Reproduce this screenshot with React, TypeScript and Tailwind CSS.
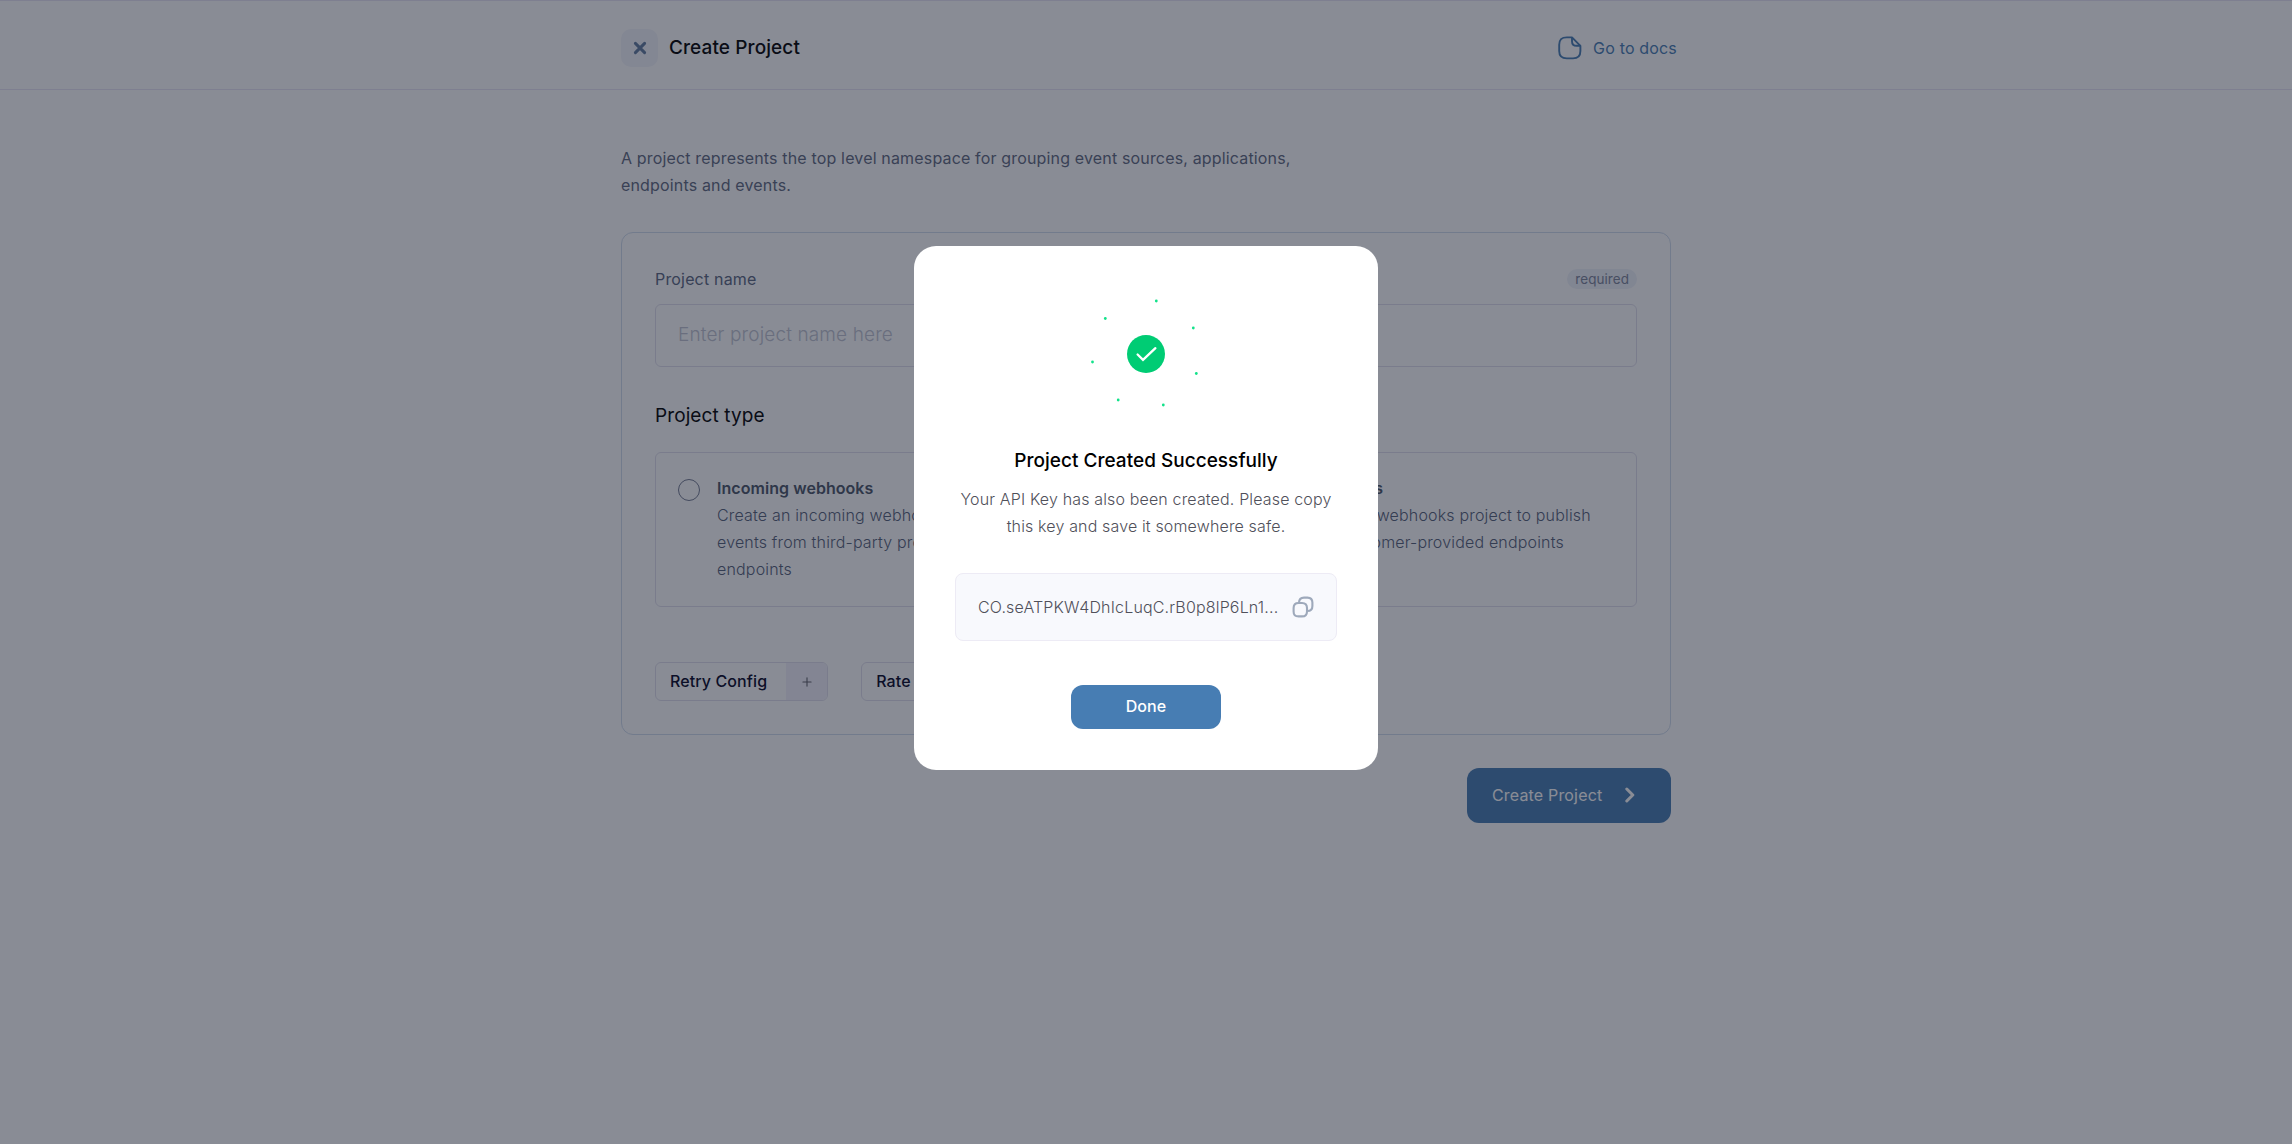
import { Plus } from "lucide-react";

const sparks = [
  [70.3, 7],
  [19.3, 24.5],
  [107.3, 34],
  [110.3, 79.5],
  [32.2, 106],
  [77.3, 111],
  [6.5, 68],
];

function CloseIcon() {
  return (
    <svg width="14" height="14" viewBox="0 0 14 14" fill="none" stroke="#607b9e" strokeWidth="3" strokeLinecap="round">
      <path d="M2.4 2.4l9.2 9.2M11.6 2.4l-9.2 9.2" />
    </svg>
  );
}

function DocIcon() {
  return (
    <svg width="24" height="24" viewBox="0 0 24 24" fill="none" stroke="#477db3" strokeWidth="1.9" strokeLinejoin="round">
      <path d="M14 1.4H8.8C3.6 1.4 1.2 3.6 1.2 8.8v6.2c0 5.2 2.4 7.4 7.6 7.4h6.2c5.2 0 7.4-2.2 7.4-7.4V9.8z" />
      <path d="M14 1.4v3.8c0 3.2 1.2 4.6 4.6 4.6h3.8" />
    </svg>
  );
}

function CopyIcon() {
  return (
    <svg width="22" height="22" viewBox="0 0 22 22" fill="none" stroke="#9ea9bb" strokeWidth="2.1" strokeLinejoin="round">
      <path d="M15 12.4v3c0 3.6-1.4 5-5 5H6.6c-3.6 0-5-1.4-5-5V12c0-3.6 1.4-5 5-5H10c3.6 0 5 1.4 5 5z" />
      <path d="M7 6.6c.1-3.500 1.500-5 5-5h3.400c3.600 0 5 1.400 5 5V10c0 3.600-1.400 5-5 5h-.4" />
    </svg>
  );
}

function SuccessMark() {
  return (
    <svg width="120" height="120" viewBox="0 0 120 120" fill="none">
      <circle cx="60" cy="60" r="19" fill="#00cc74" />
      <path d="M51.6 60.5L57 65.8 69.4 54.2" stroke="#fff" strokeWidth="2.3" strokeLinecap="round" />
      {sparks.map(([cx, cy]) => (
        <circle key={cx} cx={cx} cy={cy} r="1.4" fill="#12e28a" />
      ))}
    </svg>
  );
}

function TypeCard({ title, text }: { title: string; text: string[] }) {
  return (
    <div className="flex h-[155px] flex-1 gap-[17px] rounded-md border border-[#e1dfec] pt-[22px] pl-[22px]">
      <div className="mt-[4px] h-[22px] w-[22px] shrink-0 rounded-full border border-[#737a91]" />
      <div className="leading-[27px]">
        <h4 className="font-semibold tracking-[0.05px] text-[#4b5567]">{title}</h4>
        <p className="font-light text-[#556078]">
          {text.map((line) => (
            <span key={line} className="block whitespace-nowrap">{line}</span>
          ))}
        </p>
      </div>
    </div>
  );
}

function ConfigButton({ label }: { label: string }) {
  return (
    <button className="flex h-[39px] overflow-hidden rounded-md border border-[#e1dfec] font-medium tracking-[0.1px] text-[#050524]">
      <span className="flex h-full items-center pr-[19px] pb-px pl-[14px]">{label}</span>
      <span className="flex h-full w-[41px] items-center justify-center bg-[#f2f1fa]">
        <Plus size={14} strokeWidth={1.9} color="#5f5f68" />
      </span>
    </button>
  );
}

export default function App() {
  return (
    <div className="h-[1144px] overflow-hidden bg-white font-['Inter',sans-serif] text-[16px] tracking-[0.17px]">
      <header className="h-[90px] border-t border-b border-[#e9e5f4]">
        <div className="mx-auto flex h-[93px] w-[1056px] items-center justify-between pl-[3px]">
          <div className="flex items-center gap-[11px]">
            <button className="flex h-[38px] w-[37px] items-center justify-center rounded-[10px] bg-[#f3f4fa]">
              <CloseIcon />
            </button>
            <h1 className="pt-px text-[19px] leading-7 font-medium tracking-[0.1px] text-black">Create Project</h1>
          </div>
          <a className="mr-[-3px] flex items-center gap-[11px] text-[#477db3]">
            <DocIcon />
            Go to docs
          </a>
        </div>
      </header>

      <main className="mx-auto w-[1050px] pt-[55px]">
        <p className="w-[700px] leading-[27px] tracking-[0.16px] text-[#5f6980]">
          A project represents the top level namespace for grouping event sources, applications, endpoints and events.
        </p>

        <section className="mt-[33px] h-[503px] rounded-xl border border-[#d0dcec] px-[33px] pt-[32px]">
          <div className="flex h-7 items-center justify-between text-[#5a6680]">
            <label>Project name</label>
            <span className="flex h-5 items-center rounded-full bg-[#eff2f9] px-2 text-[13.5px] tracking-[0.05px] text-[#7c8499]">
              required
            </span>
          </div>
          <div className="mt-[11px] flex h-[63px] items-center rounded-md border border-[#e1dfec] px-[22px] text-[19px] font-light tracking-[0.14px] text-[#c0c3d0]">
            Enter project name here
          </div>
          <h2 className="mt-[35px] text-[19px] leading-7 font-normal tracking-[0.1px] text-black">Project type</h2>
          <div className="mt-[22px] flex gap-[38px]">
            <TypeCard
              title="Incoming webhooks"
              text={["Create an incoming webhooks project to proxy", "events from third-party providers to your", "endpoints"]}
            />
            <TypeCard
              title="Outgoing webhooks"
              text={["Create an outgoing webhooks project to publish", "events to your customer-provided endpoints"]}
            />
          </div>
          <div className="mt-[55px] flex gap-[33px]">
            <ConfigButton label="Retry Config" />
            <ConfigButton label="Rate Limit" />
          </div>
        </section>

        <div className="mt-[33px] flex justify-end">
          <button className="flex h-[55px] w-[204px] items-center gap-[23px] rounded-xl bg-[#477db3] pb-px pl-[25px] text-white">
            Create Project
            <svg width="10" height="16" viewBox="0 0 10 16" fill="none" stroke="#fff" strokeWidth="3" strokeLinecap="round" strokeLinejoin="round">
              <path d="M1.8 2l6 6-6 6" />
            </svg>
          </button>
        </div>
      </main>

      <div className="fixed inset-0 flex items-start justify-center bg-[#13192b]/50 pt-[245.5px]">
        <div role="dialog" className="flex h-[524px] w-[464px] flex-col items-center rounded-[22px] bg-white pt-[48.5px]">
          <SuccessMark />
          <h2 className="mt-[33px] text-[19px] leading-7 font-medium tracking-[0.02px] text-black">
            Project Created Successfully
          </h2>
          <p className="mt-[11px] text-center leading-[27px] font-light tracking-[0.15px] text-[#50505a]">
            Your API Key has also been created. Please copy
            <br />
            this key and save it somewhere safe.
          </p>
          <div className="mt-[33px] flex h-[68px] w-[382px] items-center justify-between rounded-lg border border-[#edebf5] bg-[#f8f9fd] px-[22px] font-light text-[#50505a]">
            <span>CO.seATPKW4DhIcLuqC.rB0p8lP6Ln1...</span>
            <CopyIcon />
          </div>
          <button className="mt-[44px] h-[43.5px] w-[150px] rounded-xl bg-[#477db3] pb-[2px] font-medium tracking-[0.1px] text-white">
            Done
          </button>
        </div>
      </div>
    </div>
  );
}
